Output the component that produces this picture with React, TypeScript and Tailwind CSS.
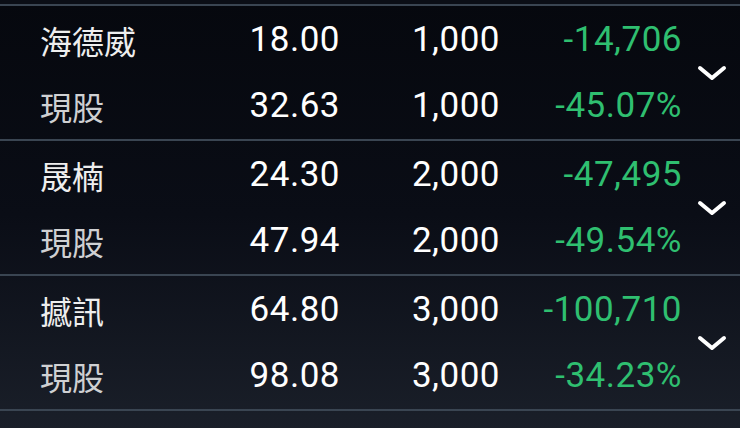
import React from "react";

type Holding = {
  name: string;
  price: string;
  cost: string;
  qty: string;
  pnl: string;
  pct: string;
};

const holdings: Holding[] = [
  { name: "海德威", price: "18.00", cost: "32.63", qty: "1,000", pnl: "-14,706", pct: "-45.07%" },
  { name: "晟楠", price: "24.30", cost: "47.94", qty: "2,000", pnl: "-47,495", pct: "-49.54%" },
  { name: "撼訊", price: "64.80", cost: "98.08", qty: "3,000", pnl: "-100,710", pct: "-34.23%" },
];

const num = { fontFamily: "Roboto, 'Noto Sans CJK TC', sans-serif" };
const cjk = { fontFamily: "'Noto Sans CJK TC', 'Noto Sans', sans-serif" };

const Chevron = () => (
  <svg width="30" height="16" viewBox="0 0 30 16" fill="none">
    <path d="M3 3 L15 13 L27 3" stroke="#ffffff" strokeWidth="4" strokeLinecap="round" strokeLinejoin="round" />
  </svg>
);

const Row = ({ label, a, b, c, dim }: { label: string; a: string; b: string; c: string; dim?: boolean }) => (
  <div className="h-[66px] flex items-center pl-[40px]">
    <div className={`w-[150px] text-[32px] leading-none ${dim ? "text-[#cfd0d2]" : "text-[#eeeeee]"}`} style={cjk}>
      {label}
    </div>
    <div className="w-[150px] text-right text-[35px] leading-none tracking-[0.5px] text-white" style={num}>{a}</div>
    <div className="w-[160px] text-right text-[35px] leading-none tracking-[0.5px] text-white" style={num}>{b}</div>
    <div className="w-[182px] text-right text-[35px] leading-none tracking-[0.5px] text-[#2fbf70]" style={num}>{c}</div>
  </div>
);

const App = () => {
  return (
    <div className="w-[740px] h-[428px] overflow-hidden bg-gradient-to-b from-[#06080e] via-[#0a0d16] to-[#1a1f29]">
      <div className="h-[4px] bg-[#0b0e16]" />
      <div className="h-[2px] bg-[#3a4552]" />
      {holdings.map((h) => (
        <div key={h.name}>
          <div className="flex h-[133px] items-center">
            <div className="flex flex-col">
              <Row label={h.name} a={h.price} b={h.qty} c={h.pnl} />
              <Row label="現股" a={h.cost} b={h.qty} c={h.pct} dim />
            </div>
            <div className="flex-1 flex items-center justify-center pl-[2px]">
              <Chevron />
            </div>
          </div>
          <div className="h-[2px] bg-[#3a4552]" />
        </div>
      ))}
    </div>
  );
};

export default App;
